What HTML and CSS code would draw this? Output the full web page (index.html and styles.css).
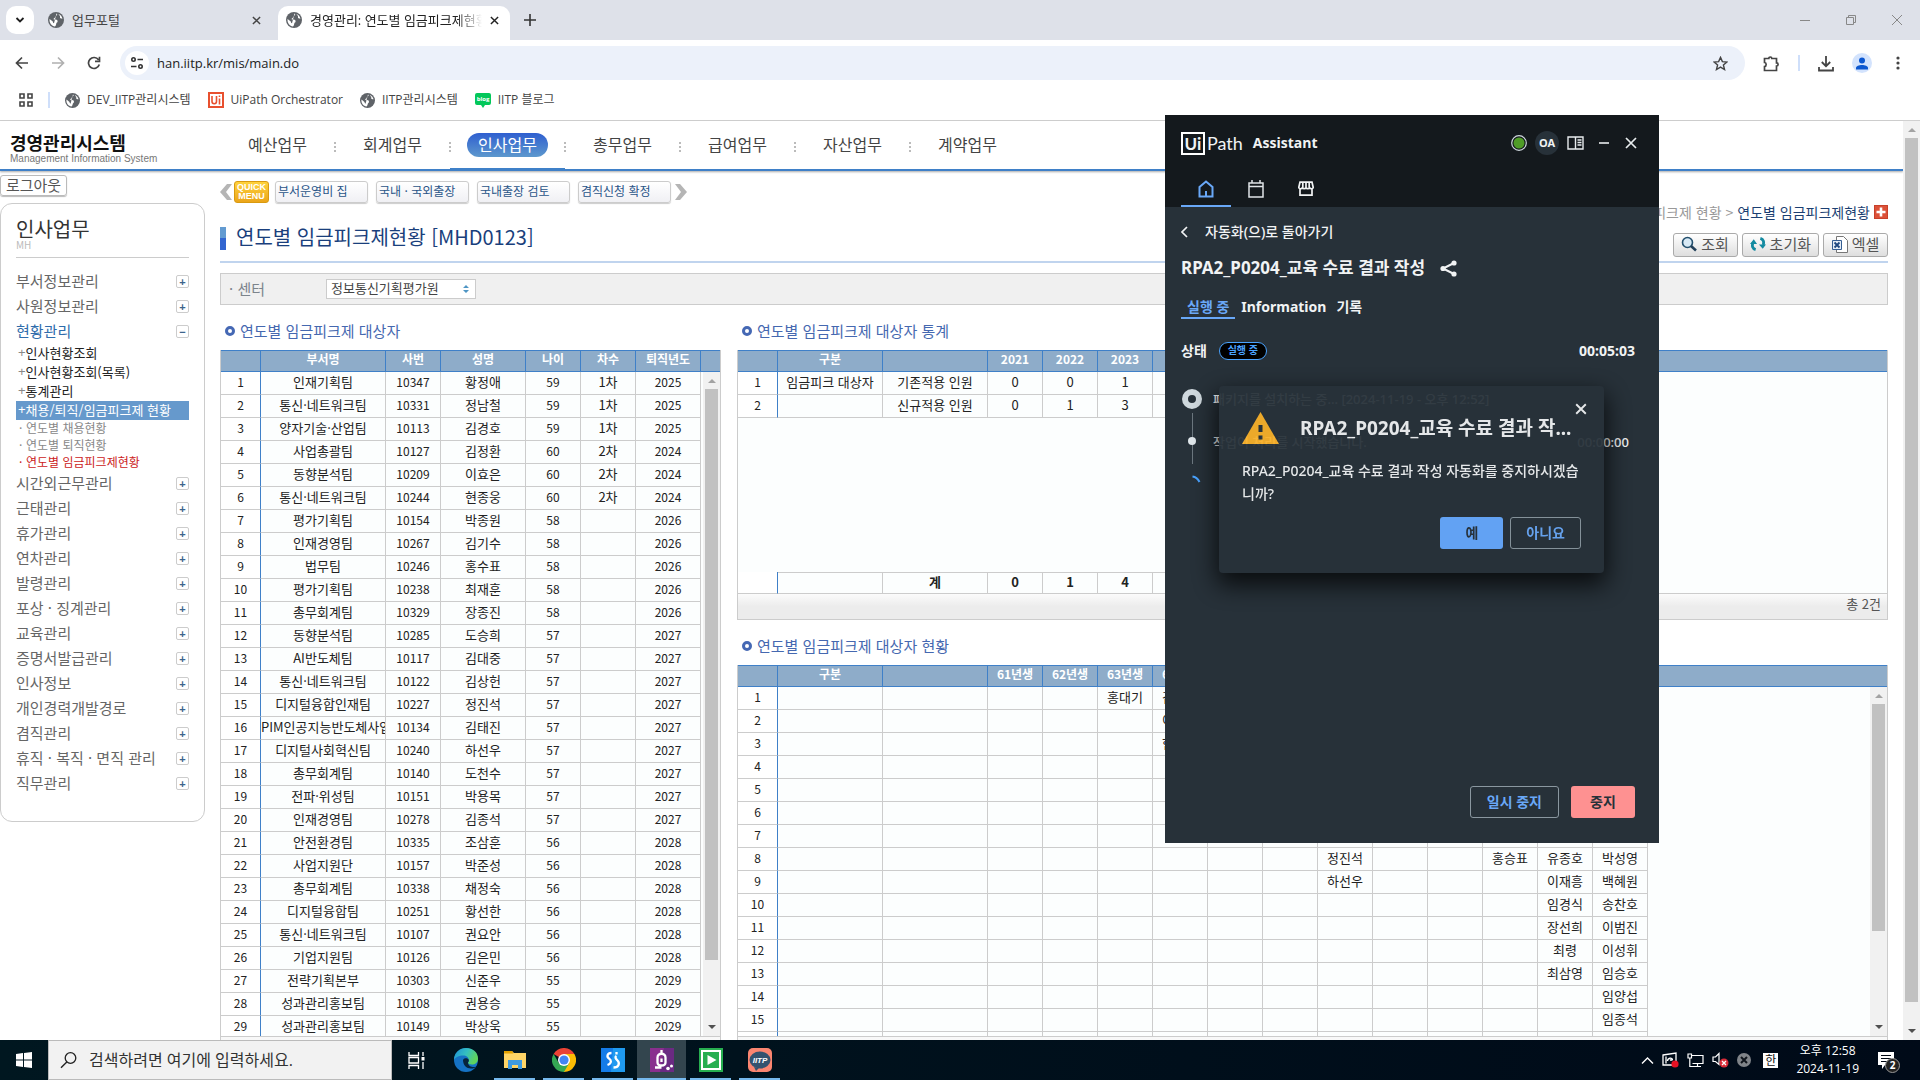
FILE: index.html
```html
<!DOCTYPE html>
<html lang="ko">
<head>
<meta charset="utf-8">
<title>경영관리: 연도별 임금피크제현황</title>
<link rel="stylesheet" href="styles.css">
</head>
<body>
<svg class="defs" aria-hidden="true">
  <symbol id="globe" viewBox="0 0 16 16"><circle cx="8" cy="8" r="8" fill="#5f6368"/><path d="M8.500 1.600C10 2 9 3.600 7.600 4.200 6.800 4.600 7.400 5.800 6.200 6.200 5 6.600 5.600 7.800 7 7.600 9 7.400 9.600 8.400 9.600 9.600c0 1.100-1.300 1.100-1.400 2.300-.1 1-.6 1.900-1.200 2.500C3.600 14 1.500 11.200 1.500 8c0-.4 0-.7.1-1L4.800 9.600c.3 1 .2 1.600 1.200 1.700M10.500 2c.6 1.600 1.900 1.600 1.500 3-.4 1.200 1 1.600 2.400 1.700C14.100 4.600 12.500 2.700 10.500 2z" fill="#fff"/></symbol>
  <symbol id="x" viewBox="0 0 10 10"><path d="M1 1l8 8M9 1L1 9" stroke="currentColor" stroke-width="1.600" fill="none"/></symbol>
  <symbol id="ring" viewBox="0 0 10 10"><circle cx="5" cy="5" r="3.500" fill="none" stroke="#4568b4" stroke-width="3"/></symbol>
</svg>

<header class="browser">
  <div class="tabstrip">
    <button class="tab-search" aria-label="탭 검색"><svg width="10" height="10" viewBox="0 0 10 10"><path d="M1.500 3L5 6.500 8.500 3" fill="none" stroke="#1f1f1f" stroke-width="1.800"/></svg></button>
    <div class="tab"><svg width="16" height="16"><use href="#globe"/></svg><span class="tab-title">업무포털</span><button class="icon-btn" aria-label="닫기"><svg width="9" height="9"><use href="#x"/></svg></button></div>
    <div class="tab active"><svg width="16" height="16"><use href="#globe"/></svg><span class="tab-title">경영관리: 연도별 임금피크제현황</span><button class="icon-btn" aria-label="닫기"><svg width="9" height="9"><use href="#x"/></svg></button></div>
    <button class="icon-btn new-tab" aria-label="새 탭"><svg width="12" height="12" viewBox="0 0 12 12"><path d="M6 0v12M0 6h12" stroke="#333" stroke-width="1.600"/></svg></button>
    <div class="win-btns">
      <button class="icon-btn" aria-label="최소화"><svg width="10" height="10"><path d="M0 5.500h10" stroke="#888"/></svg></button>
      <button class="icon-btn" aria-label="이전 크기로"><svg width="10" height="10"><path d="M.5 2.500h7v7h-7zM2.500 2.500v-2h7v7h-2" fill="none" stroke="#888"/></svg></button>
      <button class="icon-btn" aria-label="창 닫기"><svg width="10" height="10"><path d="M0 0l10 10M10 0L0 10" stroke="#888"/></svg></button>
    </div>
  </div>
  <div class="toolbar">
    <button class="icon-btn" aria-label="뒤로"><svg width="14" height="14" viewBox="0 0 14 14"><path d="M13 7H2M7 1.500L1.500 7 7 12.500" fill="none" stroke="#444" stroke-width="1.700"/></svg></button>
    <button class="icon-btn" aria-label="앞으로"><svg width="14" height="14" viewBox="0 0 14 14"><path d="M1 7h11M7 1.500L12.500 7 7 12.500" fill="none" stroke="#b0b0b0" stroke-width="1.700"/></svg></button>
    <button class="icon-btn" aria-label="새로고침"><svg width="14" height="14" viewBox="0 0 14 14"><path d="M12.300 8.500A5.500 5.500 0 1 1 11.500 3.800M12.500 .8v4.500H8" fill="none" stroke="#444" stroke-width="1.700"/></svg></button>
    <div class="omnibox">
      <span class="site-info"><svg width="14" height="12" viewBox="0 0 14 12"><g fill="none" stroke="#333" stroke-width="1.600"><circle cx="3.500" cy="2.500" r="1.700"/><path d="M7.500 2.500H13M1 9.500h5.500"/><circle cx="10.500" cy="9.500" r="1.700"/></g></svg></span>
      <input class="url" type="text" value="han.iitp.kr/mis/main.do" aria-label="주소">
      <button class="icon-btn" aria-label="북마크"><svg width="15" height="15" viewBox="0 0 16 16"><path d="M8 1.500l2 4.500 4.800.4-3.700 3.200 1.200 4.800L8 11.900l-4.300 2.500 1.200-4.800L1.200 6.400 6 6z" fill="none" stroke="#444" stroke-width="1.500"/></svg></button>
    </div>
    <div class="tool-right">
      <button class="icon-btn" aria-label="확장 프로그램"><svg width="17" height="17" viewBox="0 0 17 17"><path d="M1.500 3.500h4.300a1.500 1.500 0 0 1 3 0h4.700v4.300a1.600 1.600 0 0 1 0 3.200v4.500h-12v-4c2.200-.2 2.200-3.800 0-4z" fill="none" stroke="#444" stroke-width="1.700"/></svg></button>
      <i class="divider"></i>
      <button class="icon-btn" aria-label="다운로드"><svg width="16" height="17" viewBox="0 0 16 17"><path d="M8 1v10M3.800 7L8 11.200 12.200 7M1 12v3.500h14V12" fill="none" stroke="#444" stroke-width="1.800"/></svg></button>
      <button class="icon-btn avatar" aria-label="프로필"><svg width="12" height="13" viewBox="0 0 12 13"><circle cx="6" cy="3.500" r="3" fill="#0b57d0"/><path d="M0 12.500V11c0-4 12-4 12 0v1.500z" fill="#0b57d0"/></svg></button>
      <button class="icon-btn" aria-label="메뉴"><svg width="4" height="14"><g fill="#444"><circle cx="2" cy="2" r="1.600"/><circle cx="2" cy="7" r="1.600"/><circle cx="2" cy="12" r="1.600"/></g></svg></button>
    </div>
  </div>
  <nav class="bookmarks">
    <svg width="14" height="14"><path d="M1 1h4v4H1zM9 1h4v4H9zM1 9h4v4H1zM9 9h4v4H9z" fill="none" stroke="#444" stroke-width="1.600"/></svg>
    <i class="divider"></i>
    <a href="#"><svg width="15" height="15"><use href="#globe"/></svg>DEV_IITP관리시스템</a>
    <a href="#"><svg width="16" height="16"><path d="M1 1h14v14H1z" fill="#fff" stroke="#e8502f" stroke-width="2"/><path d="M4 4v5.500c0 3 4.500 3 4.500 0V4M11.500 6.500v6M11.500 3.500v1.500" fill="none" stroke="#e8502f" stroke-width="1.600"/></svg>UiPath Orchestrator</a>
    <a href="#"><svg width="15" height="15"><use href="#globe"/></svg>IITP관리시스템</a>
    <a href="#"><svg width="16" height="15"><path d="M2 0h12q2 0 2 2v8q0 2-2 2h-4l-2 3-2-3H2q-2 0-2-2V2Q0 0 2 0z" fill="#03c75a"/><text x="8" y="8" class="blog-text">blog</text></svg>IITP 블로그</a>
  </nav>
</header>

<div class="viewport">
  <div class="page">
    <header class="mis-head">
      <a class="logo" href="#"><strong>경영관리시스템</strong><small>Management Information System</small></a>
      <nav class="main-nav">
        <a href="#"><span>예산업무</span></a><a href="#"><span>회계업무</span></a><a class="on" href="#"><span>인사업무</span></a><a href="#"><span>총무업무</span></a><a href="#"><span>급여업무</span></a><a href="#"><span>자산업무</span></a><a href="#"><span>계약업무</span></a>
      </nav>
    </header>
    <div class="mis-body">
      <aside class="side">
        <button class="logout">로그아웃</button>
        <div class="side-panel">
          <h2>인사업무</h2>
          <p class="code">MH</p>
          <ul class="menu">
            <li><a href="#">부서정보관리</a><button aria-label="펼치기">+</button></li>
            <li><a href="#">사원정보관리</a><button aria-label="펼치기">+</button></li>
            <li class="open"><a href="#">현황관리</a><button aria-label="접기">−</button></li>
            <li class="sub"><a href="#">인사현황조회</a></li>
            <li class="sub"><a href="#">인사현황조회(목록)</a></li>
            <li class="sub"><a href="#">통계관리</a></li>
            <li class="sub sel"><a href="#">채용/퇴직/임금피크제 현황</a></li>
            <li class="leaf"><a href="#">연도별 채용현황</a></li>
            <li class="leaf"><a href="#">연도별 퇴직현황</a></li>
            <li class="leaf cur"><a href="#">연도별 임금피크제현황</a></li>
            <li><a href="#">시간외근무관리</a><button aria-label="펼치기">+</button></li>
            <li><a href="#">근태관리</a><button aria-label="펼치기">+</button></li>
            <li><a href="#">휴가관리</a><button aria-label="펼치기">+</button></li>
            <li><a href="#">연차관리</a><button aria-label="펼치기">+</button></li>
            <li><a href="#">발령관리</a><button aria-label="펼치기">+</button></li>
            <li><a href="#">포상 · 징계관리</a><button aria-label="펼치기">+</button></li>
            <li><a href="#">교육관리</a><button aria-label="펼치기">+</button></li>
            <li><a href="#">증명서발급관리</a><button aria-label="펼치기">+</button></li>
            <li><a href="#">인사정보</a><button aria-label="펼치기">+</button></li>
            <li><a href="#">개인경력개발경로</a><button aria-label="펼치기">+</button></li>
            <li><a href="#">겸직관리</a><button aria-label="펼치기">+</button></li>
            <li><a href="#">휴직 · 복직 · 면직 관리</a><button aria-label="펼치기">+</button></li>
            <li><a href="#">직무관리</a><button aria-label="펼치기">+</button></li>
          </ul>
        </div>
      </aside>

      <main class="content">
        <div class="quick">
          <button class="arrow" aria-label="이전"><svg width="12" height="16"><path d="M7 0h5L6 8l6 8H7L0 8z" fill="#b5b5b5"/></svg></button>
          <button class="quick-logo">QUICK<br>MENU</button>
          <button class="chip">부서운영비 집</button><button class="chip">국내 · 국외출장</button><button class="chip">국내출장 검토</button><button class="chip">겸직신청 확정</button>
          <button class="arrow" aria-label="다음"><svg width="12" height="16"><path d="M5 0H0l6 8-6 8h5l7-8z" fill="#b5b5b5"/></svg></button>
        </div>
        <div class="title-row">
          <h1>연도별 임금피크제현황 [MHD0123]</h1>
          <div class="title-side">
            <p class="crumb"><span>임금피크제 현황 &gt;</span> <b>연도별 임금피크제현황</b><svg width="14" height="14"><path d="M0 0h14v14H0z" fill="#c8402a"/><path d="M1 1h12v12H1z" fill="#dc5138"/><path d="M7 2.500v9M2.500 7h9" stroke="#fff" stroke-width="2.600"/></svg></p>
            <div class="actions">
              <button><svg width="16" height="16"><circle cx="6.500" cy="6.500" r="5" fill="#d7e9f5" stroke="#23506e" stroke-width="1.600"/><path d="M10 10l5 4.500" stroke="#23405a" stroke-width="2.600"/></svg>조회</button>
              <button><svg width="16" height="14" viewBox="0 0 17 14"><path d="M6 13C2.500 12 2 9 3 6M11 1c3.500 1 4 4 3 7" fill="none" stroke="#138aa0" stroke-width="3"/><path d="M0 7l4-5 3.500 5zM9.500 7.500H17L13.500 12z" fill="#138aa0"/></svg>초기화</button>
              <button><svg width="16" height="17" viewBox="0 0 16 17"><path d="M4.500.5h7l4 4v12h-11z" fill="#fff" stroke="#777"/><path d="M.5 4.500h9v9h-9z" fill="#e4ecf6" stroke="#345d92"/><path d="M2.500 6.500l5 5M7.500 6.500l-5 5" stroke="#1e477f" stroke-width="1.800"/></svg>엑셀</button>
            </div>
          </div>
        </div>
        <form class="filter"><label for="center">· 센터</label><span class="select-wrap"><select id="center"><option>정보통신기획평가원</option></select><svg width="6" height="8"><path d="M3 0l3 3H0zM0 5h6L3 8z" fill="#4e95c4"/></svg></span></form>

        <div class="grids">
          <section class="col-left">
            <h3><svg width="10" height="10"><use href="#ring"/></svg>연도별 임금피크제 대상자</h3>
            <div class="grid-box grow">
              <table class="grid people">
                <colgroup><col class="w-no"><col class="w-dept"><col class="w-id"><col class="w-name"><col class="w-id"><col class="w-id"><col class="w-year"><col></colgroup>
                <thead><tr><th><th>부서명<th>사번<th>성명<th>나이<th>차수<th>퇴직년도<th></thead>
                <tbody>
                <tr><th>1<td>인재기획팀<td>10347<td>황정애<td>59<td>1차<td>2025
                <tr><th>2<td>통신·네트워크팀<td>10331<td>정남철<td>59<td>1차<td>2025
                <tr><th>3<td>양자기술·산업팀<td>10113<td>김경호<td>59<td>1차<td>2025
                <tr><th>4<td>사업총괄팀<td>10127<td>김정환<td>60<td>2차<td>2024
                <tr><th>5<td>동향분석팀<td>10209<td>이효은<td>60<td>2차<td>2024
                <tr><th>6<td>통신·네트워크팀<td>10244<td>현종웅<td>60<td>2차<td>2024
                <tr><th>7<td>평가기획팀<td>10154<td>박종원<td>58<td><td>2026
                <tr><th>8<td>인재경영팀<td>10267<td>김기수<td>58<td><td>2026
                <tr><th>9<td>법무팀<td>10246<td>홍수표<td>58<td><td>2026
                <tr><th>10<td>평가기획팀<td>10238<td>최재훈<td>58<td><td>2026
                <tr><th>11<td>총무회계팀<td>10329<td>장종진<td>58<td><td>2026
                <tr><th>12<td>동향분석팀<td>10285<td>도승희<td>57<td><td>2027
                <tr><th>13<td>AI반도체팀<td>10117<td>김대중<td>57<td><td>2027
                <tr><th>14<td>통신·네트워크팀<td>10122<td>김상헌<td>57<td><td>2027
                <tr><th>15<td>디지털융합인재팀<td>10227<td>정진석<td>57<td><td>2027
                <tr><th>16<td>PIM인공지능반도체사업팀<td>10134<td>김태진<td>57<td><td>2027
                <tr><th>17<td>디지털사회혁신팀<td>10240<td>하선우<td>57<td><td>2027
                <tr><th>18<td>총무회계팀<td>10140<td>도천수<td>57<td><td>2027
                <tr><th>19<td>전파·위성팀<td>10151<td>박용목<td>57<td><td>2027
                <tr><th>20<td>인재경영팀<td>10278<td>김종석<td>57<td><td>2027
                <tr><th>21<td>안전환경팀<td>10335<td>조삼훈<td>56<td><td>2028
                <tr><th>22<td>사업지원단<td>10157<td>박준성<td>56<td><td>2028
                <tr><th>23<td>총무회계팀<td>10338<td>채정숙<td>56<td><td>2028
                <tr><th>24<td>디지털융합팀<td>10251<td>황선한<td>56<td><td>2028
                <tr><th>25<td>통신·네트워크팀<td>10107<td>권요안<td>56<td><td>2028
                <tr><th>26<td>기업지원팀<td>10126<td>김은민<td>56<td><td>2028
                <tr><th>27<td>전략기획본부<td>10303<td>신준우<td>55<td><td>2029
                <tr><th>28<td>성과관리홍보팀<td>10108<td>권용승<td>55<td><td>2029
                <tr><th>29<td>성과관리홍보팀<td>10149<td>박상욱<td>55<td><td>2029
                </tbody>
              </table>
              <div class="scrollbar in-grid"><i class="up"></i><span class="thumb long"></span><i class="down"></i></div>
            </div>
            <div class="grid-foot cut"></div>
          </section>

          <section class="col-right">
            <h3><svg width="10" height="10"><use href="#ring"/></svg>연도별 임금피크제 대상자 통계</h3>
            <div class="grid-box">
              <table class="grid">
                <colgroup><col class="w-no"><col class="w-kind" span="2"><col class="w-y" span="12"><col></colgroup>
                <thead><tr>
                  <th><th>구분<th>
                  <th>2021<th>2022<th>2023
                  <th><th><th>
                  <th><th><th>
                  <th><th><th>
                  <th class="rest"></thead>
                <tbody>
                <tr><th>1
                  <td>임금피크 대상자<td>기존적용 인원
                  <td>0<td>0<td>1
                  <td><td><td>
                  <td><td><td>
                  <td><td><td>
                <tr><th>2
                  <td><td>신규적용 인원
                  <td>0<td>1<td>3
                  <td><td><td>
                  <td><td><td>
                  <td><td><td>
                <tr class="spacer"><td colspan="16">
                <tr class="total"><th>
                  <td><td>계
                  <td>0<td>1<td>4
                  <td><td><td>
                  <td><td><td>
                  <td><td><td>
                  <td class="rest">
                </tbody>
              </table>
            </div>
            <div class="grid-foot">총 2건</div>
            <h3><svg width="10" height="10"><use href="#ring"/></svg>연도별 임금피크제 대상자 현황</h3>
            <div class="grid-box grow">
              <table class="grid">
                <colgroup><col class="w-no"><col class="w-kind" span="2"><col class="w-y" span="12"><col></colgroup>
                <thead><tr>
                  <th><th>구분<th>
                  <th>61년생<th>62년생<th>63년생
                  <th>64년생<th><th>
                  <th><th><th>
                  <th><th><th>
                  <th class="rest"></thead>
                <tbody>
                <tr><th>1<td><td> <td><td><td>홍대기 <td>김정환<td><td> <td><td><td> <td><td><td>
                <tr><th>2<td><td> <td><td><td> <td>이효은<td><td> <td><td><td> <td><td><td>
                <tr><th>3<td><td> <td><td><td> <td>현종웅<td><td> <td><td><td> <td><td><td>
                <tr><th>4<td><td> <td><td><td> <td><td><td> <td><td><td> <td><td><td>
                <tr><th>5<td><td> <td><td><td> <td><td><td> <td><td><td> <td><td><td>
                <tr><th>6<td><td> <td><td><td> <td><td><td> <td><td><td> <td><td><td>
                <tr><th>7<td><td> <td><td><td> <td><td><td> <td><td><td> <td><td><td>
                <tr><th>8<td><td> <td><td><td> <td><td><td> <td>정진석<td><td> <td>홍승표<td>유종호<td>박성영
                <tr><th>9<td><td> <td><td><td> <td><td><td> <td>하선우<td><td> <td><td>이재흥<td>백혜원
                <tr><th>10<td><td> <td><td><td> <td><td><td> <td><td><td> <td><td>임경식<td>송찬호
                <tr><th>11<td><td> <td><td><td> <td><td><td> <td><td><td> <td><td>장선희<td>이범진
                <tr><th>12<td><td> <td><td><td> <td><td><td> <td><td><td> <td><td>최령<td>이성휘
                <tr><th>13<td><td> <td><td><td> <td><td><td> <td><td><td> <td><td>최삼영<td>임승호
                <tr><th>14<td><td> <td><td><td> <td><td><td> <td><td><td> <td><td><td>임양섭
                <tr><th>15<td><td> <td><td><td> <td><td><td> <td><td><td> <td><td><td>임종석
                <tr><th><td><td> <td><td><td> <td><td><td> <td><td><td> <td><td><td>
                </tbody>
              </table>
              <div class="scrollbar in-grid"><i class="up"></i><span class="thumb mid"></span><i class="down"></i></div>
            </div>
            <div class="grid-foot cut"></div>
          </section>
        </div>
      </main>
    </div>
  </div>
  <div class="scrollbar"><i class="up"></i><span class="thumb page-thumb"></span><i class="down"></i></div>
</div>

<section class="assistant" aria-label="UiPath Assistant">
  <header class="as-head">
    <div class="as-bar">
      <span class="ui-box">Ui</span><span class="ui-path">Path</span><strong>Assistant</strong>
      <span class="as-tools">
        <svg width="16" height="16"><circle cx="8" cy="8" r="7.300" fill="none" stroke="#cfd8dd" stroke-width="1.200"/><circle cx="8" cy="8" r="5.500" fill="#4f9c27"/></svg>
        <span class="oa">OA</span>
        <svg width="17" height="14"><path d="M1 1h15v12H1zM8.500 1v12M10.500 4h4M10.500 6.500h4M10.500 9h4" fill="none" stroke="#e8ecee" stroke-width="1.400"/></svg>
        <button class="icon-btn" aria-label="최소화"><svg width="10" height="10"><path d="M0 5h10" stroke="#e8ecee" stroke-width="1.600"/></svg></button>
        <button class="icon-btn" aria-label="닫기"><svg width="12" height="12"><path d="M1 1l10 10M11 1L1 11" stroke="#e8ecee" stroke-width="1.700"/></svg></button>
      </span>
    </div>
    <nav class="as-tabs">
      <a class="on" href="#" aria-label="홈"><svg width="16" height="18" viewBox="0 0 16 18"><path d="M1.500 7L8 1.500 14.500 7v9.500h-13zM8 11v5" fill="none" stroke="#69a8f8" stroke-width="2"/></svg></a>
      <a href="#" aria-label="일정"><svg width="16" height="18" viewBox="0 0 16 18"><path d="M1 3h14v14H1zM1 6.500h14M4 0v3M12 0v3" fill="none" stroke="#dfe4e7" stroke-width="1.500"/></svg></a>
      <a href="#" aria-label="마켓플레이스"><svg width="16" height="16" viewBox="0 0 16 16"><path d="M2 1.200h12l1.200 5c0 2-3 2-3.600.4-.6 1.400-3 1.400-3.600 0-.6 1.400-3 1.400-3.600 0C3.800 8.200.8 8.200.8 6.200zM4.800 1.500v5M8 1.500v5M11.200 1.500v5M2 8v6.200h12V8" fill="none" stroke="#f2f4f5" stroke-width="1.700"/></svg></a>
    </nav>
  </header>
  <div class="as-body">
    <a class="back" href="#"><svg width="7" height="12"><path d="M6 1L1 6l5 5" fill="none" stroke="#f1f3f4" stroke-width="1.700"/></svg>자동화(으)로 돌아가기</a>
    <h2>RPA2_P0204_교육 수료 결과 작성<svg width="17" height="17"><path d="M14 3L3 8.500 14 14" fill="none" stroke="#f1f3f4" stroke-width="2"/><g fill="#f1f3f4"><circle cx="14" cy="3" r="2.600"/><circle cx="3" cy="8.500" r="2.600"/><circle cx="14" cy="14" r="2.600"/></g></svg></h2>
    <nav class="sub-tabs"><a class="on" href="#">실행 중</a><a href="#">Information</a><a href="#">기록</a></nav>
    <div class="state"><b>상태</b><span class="pill">실행 중</span><b class="time">00:05:03</b></div>
    <ol class="steps">
      <li><svg width="20" height="64"><circle cx="10" cy="10" r="7" fill="none" stroke="#cfd8dd" stroke-width="6"/><path d="M10.500 24v26" stroke="#6b767e"/></svg><span>패키지를 설치하는 중... [2024-11-19 - 오후 12:52]</span></li>
      <li><svg width="20" height="36"><path d="M10.500 0v32" stroke="#6b767e"/><circle cx="10" cy="9" r="4" fill="#dfe6ea"/></svg><span>작업이 처리를 시작했습니다.</span><span class="time">00:00:00</span></li>
      <li><svg width="20" height="14"><path d="M10.500 1.500q4.500.5 7 5.500" fill="none" stroke="#4aa3ff" stroke-width="2"/></svg></li>
    </ol>
    <div class="as-foot"><button class="btn outline">일시 중지</button><button class="btn stop">중지</button></div>
  </div>
  <div class="dialog" role="dialog" aria-label="중지 확인">
    <button class="icon-btn dlg-x" aria-label="닫기"><svg width="12" height="12"><use href="#x"/></svg></button>
    <div class="dlg-title"><svg width="37" height="32" viewBox="0 0 37 32"><path d="M18.500 0L37 32H0z" fill="#f9b12a"/><path d="M18.500 13v7M18.500 23.500v4" stroke="#273139" stroke-width="4"/></svg><h3>RPA2_P0204_교육 수료 결과 작...</h3></div>
    <p>RPA2_P0204_교육 수료 결과 작성 자동화를 중지하시겠습니까?</p>
    <div class="dlg-btns"><button class="btn yes">예</button><button class="btn outline">아니요</button></div>
  </div>
</section>

<footer class="taskbar">
  <button class="tb start" aria-label="시작"><svg width="16" height="16"><path d="M0 2l7-1v6.500H0zM8 .9L16 0v7.500H8zM0 8.500h7V15l-7-1zM8 8.500h8V16l-8-1.100z" fill="#fff"/></svg></button>
  <label class="search"><svg width="18" height="18"><circle cx="10.500" cy="7" r="5.300" fill="none" stroke="#222" stroke-width="1.300"/><path d="M6.800 11L1 16.800" stroke="#222" stroke-width="1.400"/></svg><input type="text" placeholder="검색하려면 여기에 입력하세요." aria-label="검색"></label>
  <button class="tb" aria-label="작업 보기"><svg width="17" height="17"><path d="M1 0v3.500h9.500V0M1 17v-3.500h9.500V17M1 5.500h9.500v5.500H1zM15 0v4M15 10v7" fill="none" stroke="#fff" stroke-width="1.300"/><path d="M13.500 5h3v3.500h-3z" fill="#fff"/></svg></button>
  <button class="tb" aria-label="Edge"><svg width="24" height="24" viewBox="0 0 24 24"><defs><linearGradient id="eg" x1="0" x2="1" y1="0" y2=".4"><stop offset="0" stop-color="#1b8fd8"/><stop offset=".55" stop-color="#35c0c0"/><stop offset="1" stop-color="#5fd35b"/></linearGradient></defs><circle cx="12" cy="12" r="12" fill="#1572c4"/><path d="M0 12C0 4.500 6 0 12 0c7 0 12 4.500 12 10.500 0 4-3 6-6 6-2.500 0-4.300-.8-4-2 .8-1 .8-1.800.8-2.500 0-2.500-2.300-4.500-5.500-4.500C5 7.500 1 9.500 0 12z" fill="url(#eg)"/><path d="M9 12c0 5 3.500 8.500 8 8.500 2.500 0 4-.6 5.500-2-3 1.500-8.500 0-8.500-4 .9-1 .9-1.800.8-2.500-.4-2-5-2.500-5.800 0z" fill="#06243c"/></svg></button>
  <button class="tb run" aria-label="파일 탐색기"><svg width="22" height="18" viewBox="0 0 22 18"><path d="M0 0h8l2 2h12v15H0z" fill="#ffd567"/><path d="M0 0h8l1.500 2.500H0z" fill="#e2a000"/><path d="M4 9h14v9h-4v-4H8v4H4z" fill="#3f9ae0"/></svg></button>
  <button class="tb run" aria-label="Chrome"><svg width="24" height="24" viewBox="0 0 24 24"><path d="M12 12L1.600 6A12 12 0 0 1 22.400 6z" fill="#ea4335"/><path d="M12 12V6h10.400A12 12 0 0 1 12 24z" fill="#fbbc04"/><path d="M12 12l5.200 3L12 24A12 12 0 0 1 1.600 6l5.200 9z" fill="#34a853"/><circle cx="12" cy="12" r="6" fill="#fff"/><circle cx="12" cy="12" r="4.600" fill="#4285f4"/></svg></button>
  <button class="tb run" aria-label="Studio"><svg width="24" height="24"><path d="M0 0h24v24H0z" fill="#147be8"/><path d="M12 0h12v24H10z" fill="#1f9af0"/><path d="M10.500 5C6 5 5.500 9 8 10.500s3 5-1.500 6.500M12.500 19.500c5.500 0 6.500-4.500 4-7s-2.500-3.500-1-4.500M15.500 4v2.500" fill="none" stroke="#fff" stroke-width="2.300"/></svg></button>
  <button class="tb run focus" aria-label="Assistant"><svg width="24" height="24"><path d="M0 0h24v24H0z" fill="#8a2f8e"/><path d="M14 0h10v24H10z" fill="#6a2a82"/><path d="M7.500 9.500c0-5 8-5 8 0v5c0 4-8 4-8 0zM5 19.500h6.500M11.500 2v4M11.500 10.500v3.500" fill="none" stroke="#fff" stroke-width="2.300"/><circle cx="18" cy="20.500" r="1.800" fill="#fff"/><circle cx="21.500" cy="18" r="1.500" fill="#fff"/></svg></button>
  <button class="tb run" aria-label="Robot"><svg width="24" height="24"><path d="M0 0h24v24H0z" fill="#27ae50"/><path d="M3 3h18v18H3z" fill="none" stroke="#fff" stroke-width="2"/><path d="M8.500 7l9 5-9 5z" fill="#fff"/></svg></button>
  <button class="tb run" aria-label="IITP"><svg width="24" height="24"><rect width="24" height="24" rx="5" fill="#fb8570"/><ellipse cx="12" cy="12" rx="10.500" ry="8.500" fill="#33536f"/><path d="M6 19l2 4 3-3z" fill="#33536f"/><text x="12" y="15" class="iitp-text">IITP</text></svg></button>
  <div class="tray">
    <svg width="13" height="7"><path d="M1 6.500L6.500 1 12 6.500" fill="none" stroke="#fff" stroke-width="1.400"/></svg>
    <svg width="17" height="16"><path d="M1 3l13-2v12H1zM4 4.500v7M5.500 9c0-3 5-4 5-1M10.500 8H8" fill="none" stroke="#fff" stroke-width="1.300"/><circle cx="13" cy="12" r="3.600" fill="#e81123"/></svg>
    <svg width="17" height="15"><path d="M4.500 2.500H16v8H5.500M10.500 10.500v3M7 13.500h7M1 1h3.500v4H1zM2.800 5v8.500H7" fill="none" stroke="#fff" stroke-width="1.200"/></svg>
    <svg width="17" height="16"><path d="M1 5h2.500L7 1.500v11L3.500 9.500H1z" fill="none" stroke="#fff" stroke-width="1.200"/><circle cx="12" cy="11" r="4.500" fill="#d92b38"/><path d="M10 9l4 4M14 9l-4 4" stroke="#fff" stroke-width="1.300"/></svg>
    <svg width="14" height="14"><circle cx="7" cy="7" r="7" fill="#808489"/><path d="M4 4l6 6M10 4l-6 6" stroke="#10151c" stroke-width="2"/></svg>
    <span class="ime">한</span>
    <time>오후 12:58<br>2024-11-19</time>
    <span class="notice"><svg width="18" height="19"><path d="M1 1h16v13H8l-3 4v-4H1z" fill="#fff"/><path d="M4 4.500h10M4 7.500h10M4 10.500h6" stroke="#000814" stroke-width="1.200"/></svg><b>2</b></span>
  </div>
</footer>
</body>
</html>
```
FILE: styles.css
```css
* { box-sizing: border-box; }
body {
  margin: 0; height: 100vh; overflow: hidden; position: relative;
  display: flex; flex-direction: column;
  font: 13px/18px "Noto Sans CJK KR", sans-serif;
  color: #222; background: #fff;
}
h1, h2, h3, p, ul, ol { margin: 0; padding: 0; font-weight: 400; list-style: none; }
a { color: inherit; text-decoration: none; }
button, input, select { font: inherit; color: inherit; margin: 0; padding: 0; border: 0; background: none; outline: 0; }
svg { display: block; flex: none; }
.defs { position: absolute; width: 0; height: 0; }
.icon-btn { display: flex; align-items: center; justify-content: center; }

/* browser frame */
.browser { flex: none; font-family: "Open Sans", "Noto Sans CJK KR", sans-serif; border-bottom: 1px solid #d0d0d0; }
.tabstrip { height: 40px; background: #dee1e9; display: flex; align-items: center; padding-left: 6px; }
.tab-search { width: 28px; height: 28px; border-radius: 10px; background: #fff; display: flex; align-items: center; justify-content: center; }
.tab { width: 244px; height: 34px; margin-top: 6px; padding: 0 17px 6px 14px; display: flex; align-items: center; gap: 8px; color: #444; }
.tab.active { width: 232px; padding: 0 11px 6px 8px; background: #fff; border-radius: 10px 10px 0 0; color: #222; }
.tab-title { flex: 1; white-space: nowrap; overflow: hidden; }
.active .tab-title { -webkit-mask-image: linear-gradient(90deg, #000 85%, transparent); mask-image: linear-gradient(90deg, #000 85%, transparent); }
.new-tab { margin-left: 14px; }
.win-btns { margin-left: auto; display: flex; gap: 36px; padding-right: 18px; }
.toolbar { height: 46px; display: flex; align-items: center; padding-left: 15px; gap: 22px; }
.omnibox { flex: 1; height: 34px; margin-left: -3px; border-radius: 17px; background: #ecf1fa; display: flex; align-items: center; padding: 0 17px 0 5px; }
.site-info { width: 24px; height: 24px; border-radius: 12px; background: #fff; display: flex; align-items: center; justify-content: center; }
.url { flex: 1; padding-left: 8px; }
.tool-right { display: flex; align-items: center; gap: 18px; padding-right: 20px; margin-left: -4px; }
.divider { width: 2px; height: 16px; background: #cfdffa; }
.avatar { width: 20px; height: 20px; margin-right: 6px; border-radius: 10px; background: #d3e3fd; }
.bookmarks { height: 34px; padding: 0 0 6px 19px; display: flex; align-items: center; gap: 15px; font-size: 12px; color: #444; }
.bookmarks a { display: flex; align-items: center; gap: 7px; padding-right: 2px; }
.blog-text { font: bold 6px "Open Sans", sans-serif; fill: #fff; text-anchor: middle; }

/* scrollbars */
.scrollbar { width: 17px; flex: none; background: #f1f1f1; display: flex; flex-direction: column; align-items: center; }
.scrollbar.in-grid { position: absolute; top: 22px; right: 0; bottom: 0; }
.scrollbar .up { border: 4px solid transparent; border-bottom-color: #a3a3a3; border-top: 0; margin: 7px 0 6px; }
.scrollbar .down { border: 4px solid transparent; border-top-color: #505050; border-bottom: 0; margin: auto 0 7px; }
.thumb { width: 13px; background: #c1c1c1; }
.thumb.long { height: 86%; }
.thumb.mid { height: 65%; }
.thumb.page-thumb { height: 94%; }

/* management system page */
.viewport { flex: 1; min-height: 0; display: flex; }
.page { flex: 1; min-width: 0; display: flex; flex-direction: column; }
.mis-head { flex: none; height: 50px; border-bottom: 2px solid #3f80c8; box-shadow: 0 1px 2px #aaa; display: flex; }
.logo { width: 220px; padding: 10px 0 0 10px; }
.logo strong { display: block; font-size: 18px; line-height: 22px; color: #111; }
.logo small { display: block; font: 10px/12px "Liberation Sans", sans-serif; color: #777; }
.main-nav { display: flex; font-size: 16px; color: #444; }
.main-nav a { width: 115px; height: 48px; display: flex; justify-content: center; padding-top: 12px; position: relative; }
.main-nav a + a::before { content: ""; position: absolute; left: -1px; top: 21px; height: 10px; border-left: 2px dotted #bbb; }
.main-nav span { height: 24px; line-height: 22px; padding: 0 11px; border-radius: 12px; }
.main-nav .on { border-bottom: 1px solid #3f80c8; color: #fff; }
.main-nav .on span { background: linear-gradient(#2f5fd0, #5d98cd); }
.mis-body { flex: 1; min-height: 0; display: flex; }
.side { width: 205px; flex: none; padding-top: 4px; }
.logout { width: 67px; height: 21px; border: 1px solid #bbb; border-radius: 3px; box-shadow: 0 1px 1px #bbb; font-size: 15px; line-height: 17px; padding-bottom: 2px; color: #555; display: block; }
.side-panel { margin-top: 7px; border: 1px solid #ccc; border-radius: 12px; padding: 14px 15px 25px; }
.side-panel h2 { font-size: 20px; line-height: 22px; color: #333; }
.code { font-size: 10px; line-height: 10px; color: #bbb; padding-bottom: 7px; border-bottom: 1px solid #ccc; }
.menu { padding-top: 11px; }
.menu li { height: 25px; padding-bottom: 2px; display: flex; align-items: center; justify-content: space-between; font-size: 15px; color: #666; white-space: nowrap; }
.menu button { width: 13px; height: 13px; margin-top: 2px; border: 1px solid #ccc; border-radius: 2px; font: bold 11px/10px "Liberation Sans", sans-serif; color: #3d648c; }
.menu .open { color: #2f6cab; }
.menu .sub { height: 19px; font-size: 13px; color: #222; padding-left: 2px; justify-content: flex-start; }
.menu .sub::before { content: "+"; font: 13px/18px "Liberation Sans", sans-serif; color: #888; }
.menu .sel { background: #6699cc; color: #fff; }
.menu .sel::before { color: #fff; }
.menu .leaf { height: 17px; font-size: 12px; color: #888; padding-left: 3px; justify-content: flex-start; }
.menu .leaf::before { content: "·"; width: 7px; }
.menu .cur { color: #cc2222; }

.content { flex: 1; min-width: 0; padding: 10px 15px 0; display: flex; flex-direction: column; }
.quick { height: 22px; display: flex; align-items: center; }
.quick-logo { width: 35px; height: 22px; margin: 0 6px 0 2px; border: 1px solid #d99a10; border-radius: 3px; background: linear-gradient(#ffd23c, #eba51a); color: #fff; font: bold 9px/9px "Liberation Sans", sans-serif; }
.chip { width: 93px; height: 22px; margin-right: 8px; padding: 0 0 2px 2px; text-align: left; font-size: 12px; color: #2a5588; border: 1px solid #ccc; border-radius: 3px; background: linear-gradient(#fff, #f0f0f4); box-shadow: 0 1px 1px #ccc; white-space: nowrap; }
.chip:nth-last-child(2) { margin-right: 4px; }
.title-row { height: 60px; border-bottom: 2px solid #c0d4ee; display: flex; justify-content: space-between; align-items: flex-end; }
h1 { font-size: 20px; height: 23px; line-height: 19px; color: #1a3f7c; margin-bottom: 11px; display: flex; gap: 10px; }
h1::before { content: ""; width: 6px; background: linear-gradient(#639bd1 50%, #3265d0 50%); }
.crumb { display: flex; justify-content: flex-end; align-items: center; gap: 4px; font-size: 14px; color: #999; margin-bottom: 12px; white-space: nowrap; }
.crumb b { font-weight: 400; color: #1b3f72; }
.actions { display: flex; justify-content: flex-end; gap: 4px; padding-bottom: 4px; }
.actions button { height: 24px; min-width: 65px; padding: 0 7px 2px; display: flex; align-items: center; justify-content: center; gap: 4px; font-size: 15px; line-height: 20px; color: #555; border: 1px solid #aaa; border-radius: 3px; background: linear-gradient(#fff, #dedede); }
.filter { height: 32px; flex: none; margin-top: 10px; border: 1px solid #ccc; background: #f0f0f0; display: flex; align-items: center; padding-left: 8px; }
.filter label { width: 97px; font-size: 15px; color: #7c848c; }
.select-wrap { width: 150px; height: 20px; border: 1px solid #ccc; background: #fff; display: flex; align-items: center; padding: 0 6px 0 4px; }
.select-wrap select { flex: 1; appearance: none; line-height: 16px; padding-bottom: 2px; color: #444; }

.grids { flex: 1; min-height: 0; display: flex; gap: 16px; }
.col-left { width: 501px; flex: none; }
.col-right { flex: 1; min-width: 0; }
.col-left, .col-right { display: flex; flex-direction: column; }
h3 { height: 45px; flex: none; padding: 6px 0 0 5px; display: flex; align-items: center; gap: 5px; font-size: 15px; color: #4568b0; }
.grid-box { position: relative; border: 1px solid #ccc; border-width: 0 1px; background: #fcfefe; overflow: hidden; }
.grid-box.grow { flex: 1; min-height: 0; border-bottom-width: 1px; }
.grid { width: 100%; table-layout: fixed; border-collapse: separate; border-spacing: 0; line-height: 20px; }
.w-no { width: 40px; } .w-dept { width: 125px; } .w-id { width: 55px; } .w-name { width: 85px; } .w-year { width: 65px; }
.w-kind { width: 105px; } .w-y { width: 55px; }
.grid th, .grid td { height: 23px; padding: 0 0 2px; text-align: center; font-weight: 400; white-space: nowrap; overflow: hidden; border: solid #ccc; border-width: 0 1px 1px 0; }
.grid tbody th { border-right-color: #3f80c8; background: #fff; font-size: 12px; }
.people td:nth-child(3), .people td:nth-child(5), .people td:nth-child(7) { font-size: 12px; }
.grid thead th { height: 22px; line-height: 15px; padding-bottom: 5px; font-size: 12px; font-weight: 700; color: #fff; background: #8eacc9; border-color: #3f80c8; border-top-width: 1px; }
.grid thead th:last-child { border-right-width: 0; }
.grid .spacer td { height: 154px; border: 0; }
.grid .total td { height: 22px; line-height: 18px; border-top-width: 1px; font-weight: 700; }
.grid .total th { height: 22px; line-height: 18px; }
.grid .total .rest { border-width: 0 0 1px; }
.grid-foot { height: 26px; flex: none; border: 1px solid #ccc; border-top: 0; background: linear-gradient(#fbfbfb, #ececec 50%); text-align: right; padding-right: 6px; line-height: 20px; color: #555; }
.grid-foot.cut { height: 3px; border-bottom: 0; background: #f8f8f8; }

/* assistant window */
.assistant { position: absolute; left: 1165px; top: 115px; width: 494px; height: 728px; background: #273139; color: #f1f3f4; font: 14px/20px "Noto Sans", "Noto Sans CJK KR", sans-serif; display: flex; flex-direction: column; }
.as-head { height: 92px; background: #14191d; padding: 16px 22px 0 16px; display: flex; flex-direction: column; justify-content: space-between; }
.as-bar { display: flex; align-items: center; height: 24px; }
.ui-box { width: 24px; height: 23px; border: 2px solid #fff; font: 700 17px/19px Lato, sans-serif; text-align: center; }
.ui-path { font: 18px/22px Lato, sans-serif; padding: 0 10px 0 2px; }
.as-bar strong { font: 700 14px/22px "Open Sans", sans-serif; }
.as-tools { margin-left: auto; display: flex; align-items: center; gap: 8px; }
.as-tools .icon-btn { margin-left: 7px; }
.as-tools .icon-btn:last-child { margin-left: 8px; }
.oa { width: 24px; height: 24px; border-radius: 12px; background: #273139; font-size: 11px; font-weight: 700; line-height: 24px; text-align: center; }
.as-tabs { display: flex; }
.as-tabs a { width: 50px; height: 34px; display: flex; justify-content: center; align-items: center; border-bottom: 2px solid transparent; }
.as-tabs .on { border-color: #69a8f8; }
.as-body { flex: 1; padding: 15px 24px 25px 16px; display: flex; flex-direction: column; }
.back { display: flex; align-items: center; gap: 17px; font-weight: 500; }
.as-body h2 { margin-top: 14px; height: 24px; display: flex; align-items: center; gap: 15px; font-size: 17px; font-weight: 700; white-space: nowrap; }
.sub-tabs { margin-top: 16px; display: flex; gap: 6px; font-weight: 700; }
.sub-tabs a { height: 23px; line-height: 22px; }
.sub-tabs a:last-child { padding-left: 4px; }
.sub-tabs .on { color: #69a8f8; border-bottom: 2px solid #69a8f8; padding: 0 6px; }
.state { margin-top: 22px; display: flex; align-items: center; gap: 12px; }
.pill { height: 18px; width: 48px; border: 1px solid #4aa3ff; border-radius: 9px; background: #000; color: #4aa3ff; font-size: 10px; font-weight: 700; line-height: 15px; text-align: center; }
.time { margin-left: auto; }
.steps { margin-top: 28px; padding: 0 6px 0 1px; font-size: 13px; font-weight: 500; }
.steps li { display: flex; gap: 11px; height: 43px; }
.steps li:first-child svg { height: 43px; }
.steps li:last-child { height: 14px; }
.as-foot { margin-top: auto; display: flex; justify-content: flex-end; gap: 12px; }
.btn { height: 32px; min-width: 64px; padding: 0 16px; border-radius: 3px; font-weight: 700; }
.btn.outline { border: 1px solid #8a97a0; color: #69a8f8; }
.btn.stop { background: #fe9191; color: #273139; }
.btn.yes { background: #66aaff; color: #273139; }
.dialog { position: absolute; left: 54px; top: 271px; width: 385px; height: 187px; padding: 24px 23px; background: #273139; border-radius: 4px; box-shadow: 0 10px 24px 2px #000c; opacity: .94; }
.dlg-x { position: absolute; right: 17px; top: 17px; }
.dlg-title { display: flex; align-items: center; gap: 21px; height: 36px; }
.dlg-title h3 { flex: 1; height: auto; padding: 0; display: block; font-size: 19px; line-height: 26px; font-weight: 700; color: #f1f3f4; white-space: nowrap; }
.dialog p { margin-top: 13px; line-height: 23px; font-weight: 500; word-break: break-all; }
.dlg-btns { margin-top: 12px; display: flex; justify-content: flex-end; gap: 7px; }
.dlg-btns .btn { min-width: 63px; padding: 0 15px; }

/* taskbar */
.taskbar { flex: none; height: 40px; background: linear-gradient(90deg, #001720, #000a18); display: flex; color: #fff; font-family: "Open Sans", "Noto Sans CJK KR", sans-serif; }
.tb { width: 49px; display: flex; align-items: center; justify-content: center; border: solid transparent; border-width: 2px 0; position: relative; }
.tb.start { width: 48px; }
.tb.run::after { content: ""; position: absolute; left: 4px; right: 4px; bottom: -2px; height: 2px; background: #76b9ed; }
.tb.focus { background: #33454e; background-clip: border-box; }
.tb.focus::after { left: 0; right: 0; }
.search { width: 344px; background: #f2f2f2; border: 1px solid #bbb; display: flex; align-items: center; gap: 11px; padding: 0 11px; }
.search input { flex: 1; font-size: 16px; }
.search input::placeholder { color: #333; opacity: 1; }
.iitp-text { font: italic bold 8px "Liberation Sans", sans-serif; fill: #fff; text-anchor: middle; }
.tray { margin-left: auto; display: flex; align-items: center; gap: 8px; padding-right: 25px; }
.ime { width: 15px; height: 15px; margin-left: 4px; background: #fff; color: #111; font-size: 12px; line-height: 15px; text-align: center; }
.tray time { margin: 0 8px 0 10px; font-size: 12px; line-height: 18px; text-align: center; }
.notice { position: relative; margin-left: 2px; }
.notice b { position: absolute; left: 8px; top: 7px; width: 15px; height: 15px; border-radius: 8px; border: 1px solid #999; background: #222; font-size: 10px; line-height: 13px; text-align: center; }
```
